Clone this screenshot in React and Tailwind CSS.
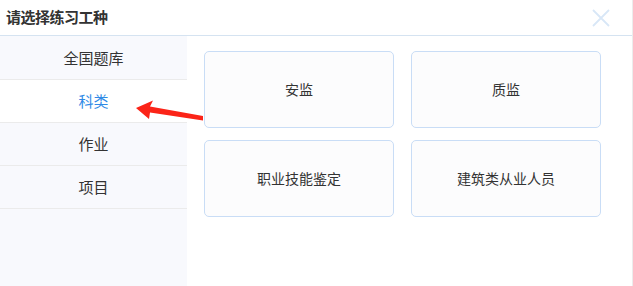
import React from "react";

const font = { fontFamily: '"Noto Sans CJK SC", "Noto Sans", sans-serif' };

export default function App() {
  const items = ["全国题库", "科类", "作业", "项目"];
  const cards = ["安监", "质监", "职业技能鉴定", "建筑类从业人员"];
  return (
    <div
      className="relative w-[633px] h-[286px] bg-white flex flex-col border-r border-[#ececec] overflow-hidden"
      style={font}
    >
      <div className="h-[36px] shrink-0 flex items-center justify-between border-b border-[#d5e3f1] pl-[6px] pr-[22px]">
        <span className="text-[15px] font-bold text-[#333] tracking-[-0.5px]">请选择练习工种</span>
        <svg width="18" height="18" viewBox="0 0 18 18" className="mt-[1px]">
          <path d="M1 1 L17 17 M17 1 L1 17" stroke="#d8e7f7" strokeWidth="1.8" fill="none" />
        </svg>
      </div>
      <div className="flex flex-1 min-h-0">
        <div className="w-[187px] shrink-0 bg-[#f8f9fd] pt-px">
          {items.map((t, i) => (
            <div
              key={t}
              className={
                "h-[43px] flex items-center justify-center border-b border-[#ebebeb] text-[15px] " +
                (i === 1 ? "bg-white text-[#2f8ae6]" : "text-[#333]")
              }
            >
              {t}
            </div>
          ))}
        </div>
        <div className="flex-1 pl-[17px] pt-[15px]">
          <div className="grid grid-cols-[190px_190px] gap-x-[17px] gap-y-[12px]">
            {cards.map((c) => (
              <div
                key={c}
                className="h-[77px] flex items-center justify-center rounded-[5px] border border-[#c9ddf6] bg-[#fcfcfd] text-[14px] text-[#333]"
              >
                {c}
              </div>
            ))}
          </div>
        </div>
      </div>
      <svg className="absolute left-0 top-0 pointer-events-none" width="633" height="286">
        <polygon
          points="136,108 153,100.5 150,106.5 203,116 203,120.5 150,112.5 149,119"
          fill="#fb2418"
        />
      </svg>
    </div>
  );
}
